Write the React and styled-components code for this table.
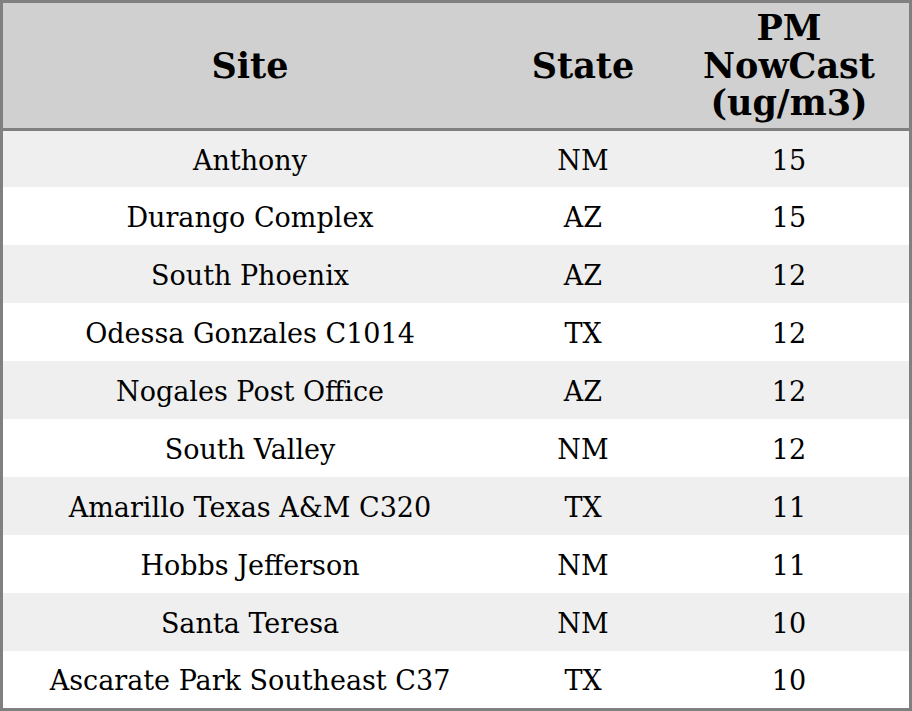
import React from 'react';
import styled, { createGlobalStyle } from 'styled-components';

const GlobalStyle = createGlobalStyle`
  html, body {
    margin: 0;
    padding: 0;
    background: #ffffff;
  }
  * {
    box-sizing: border-box;
  }
`;

const rows = [
  { site: 'Anthony', state: 'NM', pm: 15 },
  { site: 'Durango Complex', state: 'AZ', pm: 15 },
  { site: 'South Phoenix', state: 'AZ', pm: 12 },
  { site: 'Odessa Gonzales C1014', state: 'TX', pm: 12 },
  { site: 'Nogales Post Office', state: 'AZ', pm: 12 },
  { site: 'South Valley', state: 'NM', pm: 12 },
  { site: 'Amarillo Texas A&M C320', state: 'TX', pm: 11 },
  { site: 'Hobbs Jefferson', state: 'NM', pm: 11 },
  { site: 'Santa Teresa', state: 'NM', pm: 10 },
  { site: 'Ascarate Park Southeast C37', state: 'TX', pm: 10 },
];

const Table = styled.div`
  width: 912px;
  height: 711px;
  border: 3px solid #808080;
  display: grid;
  grid-template-columns: 494px 172px 1fr;
  grid-template-rows: 128px 56px repeat(8, 58px) 1fr;
  font-family: 'DejaVu Serif', serif;
  color: #000;
`;

const HeadCell = styled.div`
  background: #d0d0d0;
  border-bottom: 3px solid #808080;
  display: flex;
  align-items: center;
  justify-content: center;
  text-align: center;
  font-size: 35px;
  font-weight: bold;
  line-height: 37.5px;
`;

const Cell = styled.div`
  background: ${(props) => (props.striped ? '#efefef' : '#ffffff')};
  display: flex;
  align-items: center;
  justify-content: center;
  padding-top: 2px;
  font-size: 27px;
`;

const App = () => {
  return (
    <>
      <GlobalStyle />
      <Table>
        <HeadCell>Site</HeadCell>
        <HeadCell>State</HeadCell>
        <HeadCell>
          PM
          <br />
          NowCast
          <br />
          (ug/m3)
        </HeadCell>
        {rows.map((row, i) => (
          <React.Fragment key={row.site}>
            <Cell striped={i % 2 === 0}>{row.site}</Cell>
            <Cell striped={i % 2 === 0}>{row.state}</Cell>
            <Cell striped={i % 2 === 0}>{row.pm}</Cell>
          </React.Fragment>
        ))}
      </Table>
    </>
  );
};

export default App;
